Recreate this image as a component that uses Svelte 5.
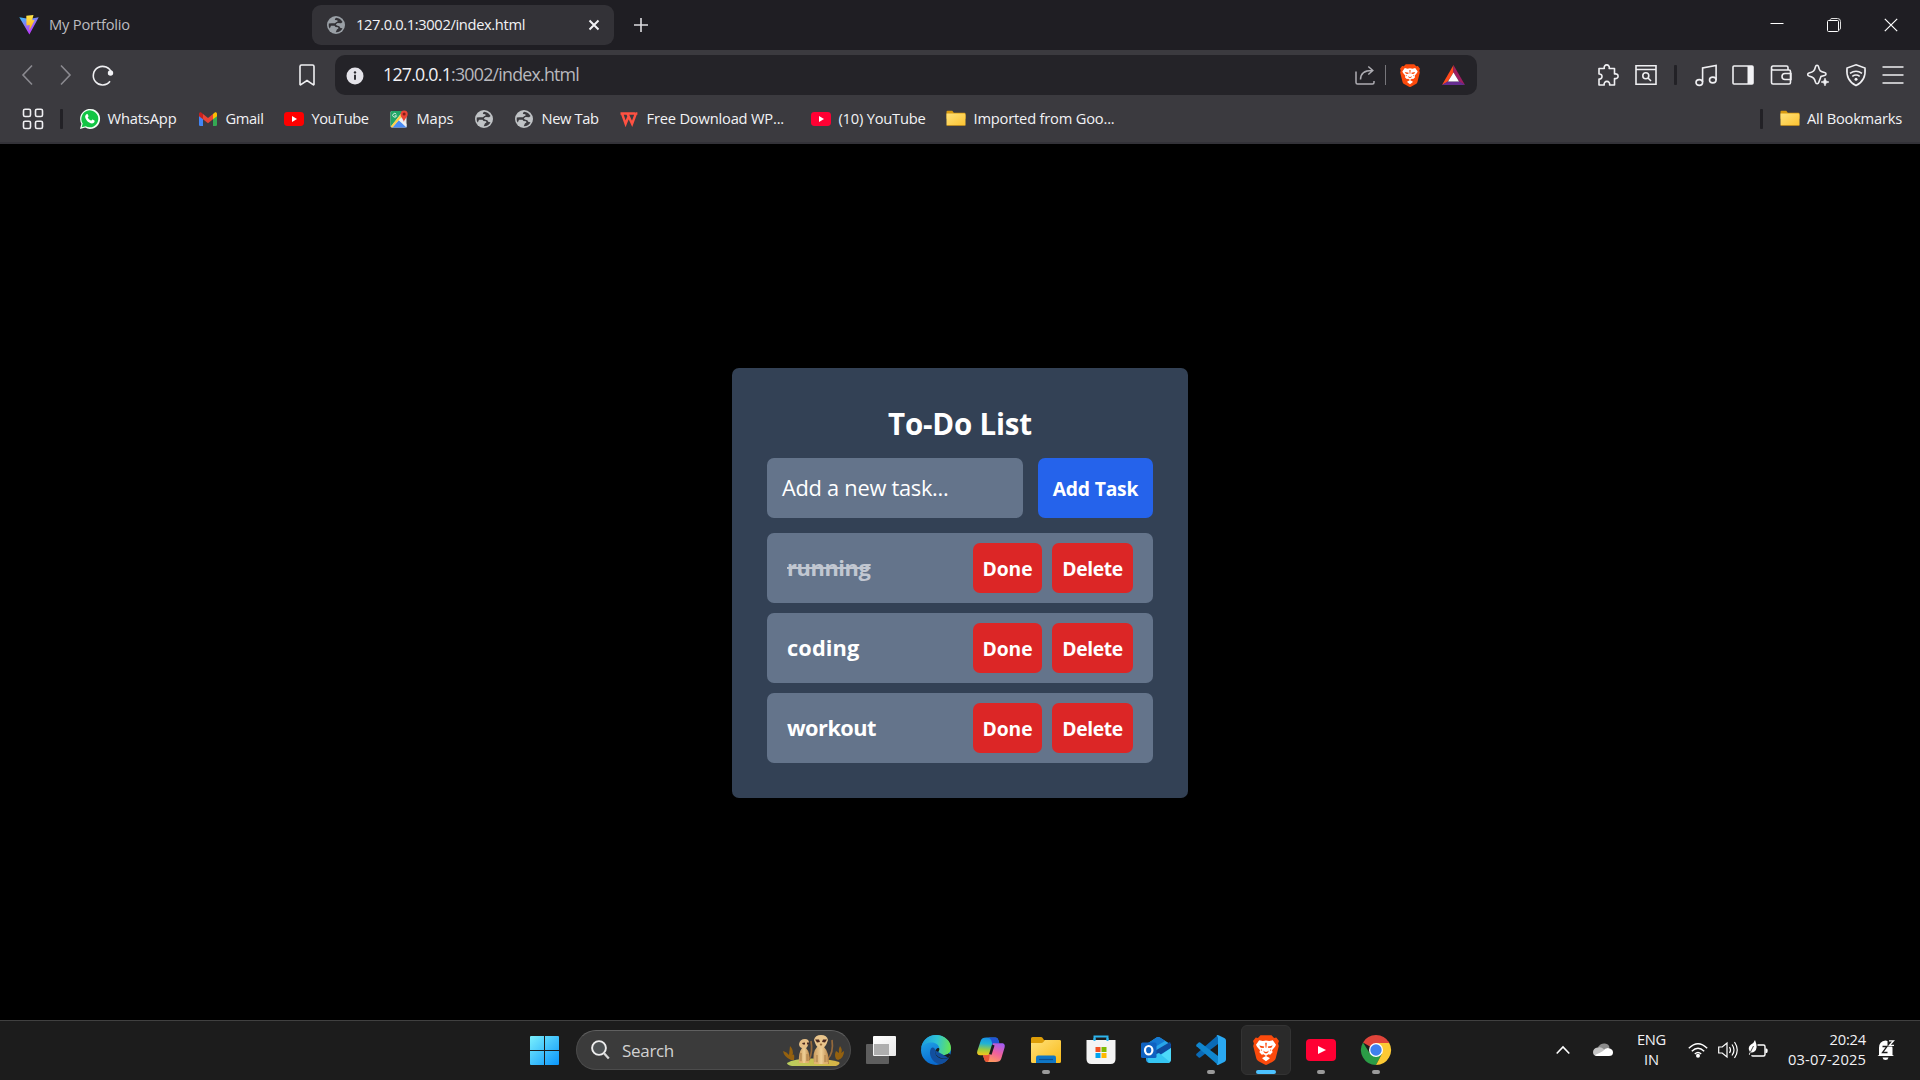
<script>
  // Adjusts tracking so that a label occupies its designed width.
  function fit(node, width) {
    const natural = node.getBoundingClientRect().width;
    const count = node.textContent.length;
    node.style.letterSpacing = `${(width - natural) / count}px`;
  }

  const bookmarks = [
    { icon: 'whatsapp', label: 'WhatsApp', text: 69, slot: 118 },
    { icon: 'gmail', label: 'Gmail', text: 38, slot: 86 },
    { icon: 'youtube', label: 'YouTube', text: 57, slot: 105 },
    { icon: 'maps', label: 'Maps', text: 37, slot: 85 },
    { icon: 'globe', label: '', text: 0, slot: 40 },
    { icon: 'globe', label: 'New Tab', text: 57, slot: 105 },
    { icon: 'wps', label: 'Free Download WP...', text: 137.5, slot: 192 },
    { icon: 'youtube2', label: '(10) YouTube', text: 87, slot: 135 },
    { icon: 'folder', label: 'Imported from Goo...', text: 141, slot: 180 }
  ];

  const tasks = [
    { name: 'running', width: 83.5, done: true },
    { name: 'coding', width: 72.5, done: false },
    { name: 'workout', width: 89, done: false }
  ];

  const apps = [
    { name: 'taskview' },
    { name: 'edge' },
    { name: 'copilot' },
    { name: 'explorer', open: true },
    { name: 'store' },
    { name: 'outlook' },
    { name: 'vscode', open: true },
    { name: 'brave', active: true },
    { name: 'ytapp', open: true },
    { name: 'chrome', open: true }
  ];
</script>

{#snippet globe(color, land)}
  <svg width="20" height="20" viewBox="0 0 20 20">
    <circle cx="10" cy="10" r="9" fill={color} />
    <path d="M10.200 2.700c-1 .5-1.500 1.200-1.200 2.200l2.200.3c.8.800.3 1.700-.8 1.900l-1.500 1.200H5.600l-2.800.1c-.3 2.200 0 3.800 1 5.200l1.200-2.800 3.500-.1 1 1.400 2.600.2.300 1.200-1.500 1.100-1.200 2.700c3 .2 5.500-1.300 6.800-4l-2-.4-1.200-1.600-2.500-.7-1-1.300 1.800-1.300 3.500.3 1.500-1.300c-1.200-2.400-3.600-4.200-6.400-4.300z" fill={land} />
  </svg>
{/snippet}

{#snippet lion(w, h)}
  <svg width={w} height={h} viewBox="0 0 26 30">
    <path d="M7.500.2h11l2.600 2.800 2.200-.4L26 6.100l-.9 2.500.7 2.400-3 12c-.5 1.800-1.200 2.500-2.800 3.500l-5.700 3.100c-.9.500-1.700.5-2.600 0L6 26.500c-1.600-1-2.300-1.700-2.800-3.500l-3-12 .7-2.400L0 6.100l2.700-3.500 2.200.4z" fill="#fb4a0c" />
    <path d="M13 5.500l3.200.6 3.600-.8 3.200 4.400-1 2-3 3.600.6 2-2.400 2.400-1.800-.4-2.400 1.600 3.800 2.200-.4.7-3.400 2.500-3.400-2.500-.4-.7L13 20.900l-2.400-1.600-1.800.4-2.400-2.400.6-2L4 11.700l-1-2 3.200-4.400 3.600.8z" fill="#fff" />
    <path d="M6.200 10.500l5 1-.5 1.400-3-.2zM19.800 10.500l-5 1 .5 1.400 3-.2zM12.200 7.800h1.600l-.4 5h-.8zM10.200 15.400l.8 2 2 1.200 2-1.200.8-2-1.200 1.200L13 17l-1.600-.4zM8.200 14l.8 2-1.300-.7zM17.800 14l-.8 2 1.300-.7z" fill="#fb4a0c" />
  </svg>
{/snippet}

{#snippet folder()}
  <svg width="20" height="20" viewBox="0 0 20 20">
    <path d="M.5 2.700q0-1 1-1h4.800l1.500 2h10.700q1 0 1 1v5H.5z" fill="#d89a10" />
    <path d="M.5 4.500h17.500q1.500 0 1.500 1.400v9.900q0 1.200-1.200 1.200H1.800Q.5 17 .5 15.700z" fill="url(#folderFill)" />
    <path d="M1 16.500h18" stroke="#b98a24" stroke-width="1" />
    <defs><linearGradient id="folderFill" x1="0" y1="0" x2="1" y2="1"><stop stop-color="#ffe27a" /><stop offset="1" stop-color="#fcc22f" /></linearGradient></defs>
  </svg>
{/snippet}

{#snippet favicon(name)}
  {#if name === 'whatsapp'}
    <svg width="20" height="20" viewBox="0 0 20 20">
      <path d="M0 20l1.400-5.200A10 10 0 1 1 5.200 18.600z" fill="#f4fff7" />
      <path d="M1.700 18.300l1-3.800a8.500 8.500 0 1 1 3 2.800z" fill="#12c544" />
      <path d="M6.800 5.100c.5-.2.900 0 1.100.5l.6 1.400c.2.500-.6 1.100-.8 1.500.8 1.500 1.900 2.500 3.500 3.200.5-.3 1-1.300 1.400-1.100l1.800.9c.7.400-.2 2.400-1.400 2.800-2 .6-4.700-1-6.200-2.900-1.600-2-2.700-4.700 0-6.300z" fill="#fff" />
    </svg>
  {:else if name === 'gmail'}
    <svg width="20" height="20" viewBox="0 0 20 20">
      <path d="M1 5.500l4 3.200V17H2.300Q1 17 1 15.700z" fill="#4285f4" />
      <path d="M19 5.500l-4 3.200V17h2.700q1.300 0 1.300-1.300z" fill="#34a853" />
      <path d="M15 5l1.500-1.300C17.600 2.900 19 3.600 19 5v2.300l-4 3z" fill="#fbbc04" />
      <path d="M5 5L3.500 3.700C2.400 2.900 1 3.600 1 5v2.300l4 3z" fill="#c5221f" />
      <path d="M5 5l5 3.900L15 5v5.300l-5 3.900-5-3.900z" fill="#ea4335" />
    </svg>
  {:else if name === 'youtube' || name === 'youtube2'}
    <svg width="20" height="20" viewBox="0 0 20 20">
      <rect x="0" y="3" width="20" height="14" rx="3.400" fill={name === 'youtube' ? '#ff0000' : '#ff0033'} />
      <path d="M8 7l5 3-5 3z" fill="#fff" />
    </svg>
  {:else if name === 'maps'}
    <svg width="20" height="20" viewBox="0 0 20 20">
      <rect x="1.500" y="2" width="16" height="16.500" rx="1.500" fill="#e6e8e8" />
      <path d="M1.500 17V3.500Q1.500 2 3 2h11L2 17.500z" fill="#23a566" />
      <path d="M10 10.800l7.500 6.200v1q0 .5-.8.500H3.500z" fill="#4a8cf5" />
      <path d="M1.700 17.500L14.500 2l2 2L3.300 18.500z" fill="#ffd04b" />
      <path d="M9.700 11.300l2-1.900 5.800 5.700v3.400z" fill="#f1f2f3" />
      <path d="M14.800 13c-.3-3-3.300-4.500-3.300-7.900a3.600 3.600 0 0 1 7.200 0c0 3.400-3.200 4.900-3.900 7.900z" fill="#ea4335" />
      <circle cx="15.100" cy="5" r="1.500" fill="#861f18" />
      <path d="M7.300 5.300a1.900 1.900 0 1 0 .2 1.500H5.700" fill="none" stroke="#e3f6ec" stroke-width=".9" />
    </svg>
  {:else if name === 'globe'}
    {@render globe('#bfc2c5', '#3b3a3f')}
  {:else if name === 'wps'}
    <svg width="20" height="20" viewBox="0 0 20 20">
      <path d="M1.500 4.500h14.700M3 4.500l3.600 10.300L10 6.200M8.300 4.500l4.800 10.300L16.900 4.500M16.500 4.500h1.900" fill="none" stroke="#ff5142" stroke-width="2.400" />
    </svg>
  {:else}
    {@render folder()}
  {/if}
{/snippet}

{#snippet appIcon(name)}
  {#if name === 'taskview'}
    <svg width="30" height="30" viewBox="0 0 30 30">
      <defs><linearGradient id="tvA" x2="1" y2="1"><stop stop-color="#fff" /><stop offset="1" stop-color="#e8e8e8" /></linearGradient></defs>
      <rect x="0" y="9" width="23" height="20" rx="1" fill="#5e5e5e" />
      <rect x="7" y="1" width="23" height="20" rx="1" fill="url(#tvA)" />
      <path d="M8 9h15v11H8z" fill="#aeaeae" />
    </svg>
  {:else if name === 'edge'}
    <svg width="30" height="30" viewBox="0 0 30 30">
      <defs>
        <linearGradient id="edA" x1="0" y1=".5" x2="1" y2=".6"><stop stop-color="#1c9de0" /><stop offset=".5" stop-color="#2fc3d4" /><stop offset="1" stop-color="#67e64f" /></linearGradient>
        <linearGradient id="edB" y2="1" x2=".4"><stop stop-color="#26b0ec" /><stop offset="1" stop-color="#0868cf" /></linearGradient>
      </defs>
      <circle cx="15" cy="15" r="15" fill="url(#edB)" />
      <path d="M.2 13C1.500 5 7.500 0 15 0c8.500 0 15 6 15 13 0 4.500-3.500 7-7.500 7-3.500 0-5.500-1.300-5.500-2.500 0-.8 1.300-1.400 1.300-3.500C18.300 10 14.500 7.600 10.800 7.600 6 7.600 2 9.500.2 13z" fill="url(#edA)" />
      <path d="M10 13.500c-3 5 .5 14.500 9.500 15.800 3.500-1 6.500-3.300 8.300-6.300.2-.6-.2-.9-.8-.6-6 3-15-.9-12.800-7.200-.4-2.400-2.600-3.800-4.200-1.700z" fill="#124f9e" />
      <path d="M17 17.500c0 1.200 2 2.500 5.500 2.500 2 0 3.900-.6 5.300-1.800l2 1.800-2.500 3c-4.500 2-13 .2-13.200-5.800 0-1.600.9-3 2.200-4 1.500-.4 2.100.3 2 1-.1 2-1.300 2.500-1.300 3.300z" fill="#1c1c1c" />
      <path d="M27 22.400c-6 3-13.800-1.200-12.800-7.200z" fill="#124f9e" />
    </svg>
  {:else if name === 'copilot'}
    <svg width="30" height="30" viewBox="0 0 30 30">
      <defs>
        <linearGradient id="cpA" x1=".5" y1="0" x2=".4" y2="1"><stop stop-color="#1690e8" /><stop offset=".35" stop-color="#20b2d4" /><stop offset=".7" stop-color="#9bcb3f" /><stop offset="1" stop-color="#f4c51c" /></linearGradient>
        <linearGradient id="cpB" x1=".8" y1="0" x2=".3" y2="1"><stop stop-color="#a35cf5" /><stop offset=".5" stop-color="#f0619c" /><stop offset="1" stop-color="#ff9f5a" /></linearGradient>
      </defs>
      <path d="M10.500 2.500h8.700c2 0 2.700 1 3.300 3l.8 2.700h-3.500c-2 0-2.800.8-3.300 2.500l-3 9.500H4.300C1.500 20.200.6 18.500 1.300 16L4.800 5.500c.8-2 2.200-3 5.700-3z" fill="url(#cpA)" />
      <path d="M12.500 2.500h6.700c2 0 2.700 1 3.300 3l.8 2.700h-3.500c-2 0-2.800.8-3.300 2.500-.5-4.500-1.500-7-4-8.200z" fill="#2354d4" />
      <path d="M19.500 27h-8c-2 0-2.800-1-3.300-3L7 20.200h3.700c2 0 2.900-.9 3.300-2.500l3-9.500h8.700c2.800 0 3.500 1.800 2.900 4.300l-3.400 11.200c-.8 2.300-2.400 3.300-5.700 3.300z" fill="url(#cpB)" />
      <path d="M7 20.200h3.700c2 0 2.900-.9 3.300-2.500-.8 4-.3 8.300-2.500 9.300-2 0-2.800-1-3.300-3z" fill="#e95437" />
      <path d="M17.300 10l-3 9.300" stroke="#1c1c1c" stroke-width="2.600" />
    </svg>
  {:else if name === 'explorer'}
    <svg width="30" height="30" viewBox="0 0 30 30">
      <defs><linearGradient id="exA" x2="1" y2="1"><stop stop-color="#ffe17b" /><stop offset="1" stop-color="#f9ba17" /></linearGradient></defs>
      <path d="M0 3.500Q0 2 1.500 2H10q1 0 1.500.8L13 5h15.500Q30 5 30 6.500V12H0z" fill="#dd9d08" />
      <path d="M0 8h10.500q1 0 1.700-.8L14 5h14.500Q30 5 30 6.500v20q0 1.500-1.500 1.500h-27Q0 28 0 26.500z" fill="url(#exA)" />
      <path d="M5 28v-5.500q0-2 2-2h16q2 0 2 2V28z" fill="#0f76c5" />
      <path d="M8 24.500h14" stroke="#0b4f91" stroke-width="1.200" />
    </svg>
  {:else if name === 'store'}
    <svg width="30" height="30" viewBox="0 0 30 30">
      <path d="M8.500 7V1.500h13V7" fill="none" stroke="#2db4ec" stroke-width="2" />
      <path d="M.5 5h29v19q0 5-5 5h-19q-5 0-5-5z" fill="#f4f4f4" />
      <path d="M8.500 6V3M21.500 6V3" stroke="#2db4ec" stroke-width="2" />
      <path d="M9.500 12h5v5h-5z" fill="#f25022" /><path d="M15.500 12h5v5h-5z" fill="#7fba00" />
      <path d="M9.500 18h5v5h-5z" fill="#00a4ef" /><path d="M15.500 18h5v5h-5z" fill="#ffb900" />
    </svg>
  {:else if name === 'outlook'}
    <svg width="30" height="30" viewBox="0 0 30 30">
      <path d="M5 9.500L15.500 2.600q1.700-1 3.400 0L30 9.500V24q0 4-4 4H9q-4 0-4-4z" fill="#28a5ea" />
      <path d="M5 9.500L15.500 2.600q1.700-1 3.400 0L24 6 9 15l-4-2z" fill="#1479d2" />
      <path d="M12 17L29 7l1 2.500V13L14 23z" fill="#0e4a9e" />
      <path d="M30 13v11q0 4-4 4H8z" fill="#4dd9fa" />
      <path d="M7 22l11-4 11 9q-1 1-3 1H9q-2 0-2-2z" fill="#35c5f2" />
      <rect x="0" y="7.500" width="15.500" height="15.500" rx="1.500" fill="#0f62c1" />
      <ellipse cx="7.700" cy="15.200" rx="3.700" ry="4.200" fill="none" stroke="#fff" stroke-width="2.200" />
    </svg>
  {:else if name === 'vscode'}
    <svg width="30" height="30" viewBox="0 0 30 30">
      <path d="M22 0v9L4.200 22.500q-.8.600-1.500 0L.5 20.400q-.8-.8 0-1.600z" fill="#0a6ab6" />
      <path d="M22 30v-9L4.200 7.500q-.8-.6-1.500 0L.5 9.600q-.8.800 0 1.600z" fill="#1086cf" />
      <path d="M20.500 29.500Q22 28.500 22 27V3q0-1.500-1.500-2.500.8-.8 2-.3L28.300 3Q30 3.900 30 5.500v19q0 1.600-1.700 2.500l-5.800 2.800q-1.200.5-2-.3z" fill="#2aa9f2" />
    </svg>
  {:else if name === 'brave'}
    {@render lion(26, 30)}
  {:else if name === 'ytapp'}
    <svg width="30" height="30" viewBox="0 0 30 30">
      <rect y="4" width="30" height="22" rx="4" fill="#ff0033" /><path d="M12 11l8 4-8 4z" fill="#fff" />
    </svg>
  {:else}
    <svg width="30" height="30" viewBox="0 0 30 30">
      <path d="M15 15L2 7.500A15 15 0 0 1 28 7.500z" fill="#e0443a" />
      <path d="M2 7.500A15 15 0 0 0 15 30l6.100-11.500L15 15 8.900 18.500z" fill="#2b9c46" />
      <path d="M28 7.500H15V15l6.100 3.500L15 30A15 15 0 0 0 28 7.500z" fill="#fcc934" />
      <path d="M15 8h13.200L27 6H6l2.900 5.500z" fill="#e0443a" />
      <circle cx="15" cy="15" r="7" fill="#fff" /><circle cx="15" cy="15" r="5.700" fill="#3f80ee" />
    </svg>
  {/if}
{/snippet}

<div class="screen">
  <header class="tabs">
    <div class="tab first">
      <svg width="20" height="20" viewBox="0 0 20 20">
        <defs><linearGradient id="viteA" x2=".5" y2="1"><stop stop-color="#36c3fb" /><stop offset=".6" stop-color="#9a66f5" /><stop offset="1" stop-color="#bd34fe" /></linearGradient>
          <linearGradient id="viteB" y2="1" x2="0"><stop stop-color="#ffe648" /><stop offset="1" stop-color="#ffa913" /></linearGradient></defs>
        <path d="M.3 2.300L10.500 4l9.200-1.700L10.400 19.600z" fill="url(#viteA)" />
        <path d="M7.300.8L14.500 0l-1.400 5.300 2.600-.3-5.400 10.500.5-5.500-3.300.5z" fill="url(#viteB)" />
      </svg>
      <span use:fit={81}>My Portfolio</span>
    </div>
    <div class="tab active">
      {@render globe('#9aa0a6', '#333237')}
      <span use:fit={169}>127.0.0.1:3002/index.html</span>
      <svg class="tab-close" width="12" height="12" viewBox="0 0 12 12"><path d="M1.500 1.500l9 9M10.500 1.500l-9 9" stroke="#f2f2f5" stroke-width="2" /></svg>
    </div>
    <svg class="plus" width="14" height="14" viewBox="0 0 14 14"><path d="M7 0v14M0 7h14" stroke="#dcdce0" stroke-width="1.600" /></svg>
    <div class="window-controls">
      <button aria-label="Minimize"><svg width="14" height="14" viewBox="0 0 14 14"><path d="M.5 5.500h13" stroke="#fff" stroke-width="1" /></svg></button>
      <button aria-label="Restore"><svg width="14" height="14" viewBox="0 0 14 14"><path d="M3 1.800Q3.500.5 5 .5h5.500q3 0 3 3V10q0 1.500-1.200 2" fill="none" stroke="#ddd" stroke-width="1" /><rect x=".5" y="2.500" width="11" height="11" rx="1" fill="none" stroke="#fff" /></svg></button>
      <button aria-label="Close"><svg width="14" height="14" viewBox="0 0 14 14"><path d="M.8.8l12.400 12.400M13.200.8L.8 13.200" stroke="#fff" stroke-width="1.200" /></svg></button>
    </div>
  </header>

  <div class="toolbar">
    <div class="nav">
      <svg width="22" height="22" viewBox="0 0 22 22"><path d="M16 1.500L7 11l9 9.500" class="dim" /></svg>
      <svg width="22" height="22" viewBox="0 0 22 22"><path d="M7 1.500l9 9.500-9 9.500" class="dim" /></svg>
      <svg width="22" height="22" viewBox="0 0 22 22"><path d="M20.500 9A9.300 9.300 0 1 0 19 17.300" class="line" /><circle cx="19.500" cy="9" r="2.700" fill="#f2f2f5" /></svg>
    </div>
    <svg class="mark" width="16" height="22" viewBox="0 0 16 22"><path d="M1 20.500V2.500Q1 1 2.500 1h11Q15 1 15 2.500v18q-.3.700-.9.200L8 16.500l-6.100 4.200q-.6.500-.9-.2z" class="line" /></svg>
    <div class="omnibox">
      <svg width="18" height="18" viewBox="0 0 18 18"><circle cx="9" cy="9" r="8.500" fill="#e4e3e9" /><path d="M9 7.800v5" stroke="#29282d" stroke-width="1.900" /><circle cx="9" cy="5.400" r="1.200" fill="#29282d" /></svg>
      <p class="url" use:fit={196}><b>127.0.0.1</b>:3002/index.html</p>
      <svg class="share" width="20" height="20" viewBox="0 0 20 20"><path d="M1 6.500v11Q1 19 2.500 19h15q1.500 0 1.500-1.500V16M5.500 14.500C5.500 8.500 9 5.500 17 5.500M13.300 1.500l4.500 4-4.500 4" fill="none" stroke="#aeadb3" stroke-width="1.500" /></svg>
      <i class="hair"></i>
      <span class="lion">{@render lion(20, 23)}</span>
      <svg width="23" height="20" viewBox="0 0 23 20"><path d="M11.500 0L0 20l5.500-3 6-9.500z" fill="#ff4a1c" /><path d="M11.500 0L23 20l-5.500-3-6-9.500z" fill="#9e1f63" /><path d="M0 20h23l-5.500-3.500h-12z" fill="#662d91" /><path d="M11.500 7.500l5.500 9H6z" fill="#fff" /></svg>
    </div>
    <div class="actions">
      <svg width="22" height="22" viewBox="0 0 22 22"><path d="M2 4.500h5.300C6.700 2.500 8 .9 9.700.9s3.100 1.600 2.500 3.600h5.300V10c2-.6 3.600.6 3.600 2.200s-1.600 2.900-3.600 2.300V21h-4.900c.5-2-.9-3.600-2.700-3.600S6.700 19 7.200 21H2v-6c2 .3 3-1 3-2.500S4 9.800 2 10z" class="line" stroke-linejoin="round" /></svg>
      <svg width="22" height="22" viewBox="0 0 22 22"><path d="M1 1.800h20v18.400H1zM1 5.500h20" class="line" /><circle cx="10.800" cy="11.800" r="3" class="line" /><path d="M13 14l3 3" class="line" /></svg>
      <i class="sep"></i>
      <svg width="22" height="22" viewBox="0 0 22 22"><ellipse cx="4.300" cy="18.500" rx="3.300" ry="2.900" class="line" /><ellipse cx="17.800" cy="16" rx="3.300" ry="2.900" class="line" /><path d="M7.600 18V4l13.500-2.500V16" class="line" /></svg>
      <svg width="22" height="22" viewBox="0 0 22 22"><rect x="1" y="2" width="20" height="18" rx="1" class="line" /><path d="M15.500 2H21v18h-5.500z" fill="#f2f2f5" /></svg>
      <svg width="22" height="22" viewBox="0 0 22 22"><path d="M1.500 4v14.500Q1.500 20 3 20h16q1.500 0 1.500-1.500V7.500Q20.500 6 19 6H3Q1.500 6 1.500 4t1.500-2h13.500Q18 2 18 3.500V6M21 9.500h-6q-3 0-3 3t3 3h6z" class="line" /></svg>
      <svg width="22" height="22" viewBox="0 0 22 22"><path d="M10 1.200c.8 0 1.300.6 1.500 1.500.8 4 2 5 6 5.800 2 .4 2 2.500 0 3l-3.500 1-2.200 5.700c-.6 2-2.700 2-3.300 0-1-4-2-5-6.500-6.200-1.700-.5-1.700-2.500 0-3 4.500-1 5.500-2.200 6.500-6.300.2-.9.700-1.500 1.500-1.500z" class="line" /><path d="M18 14l1.100 2.900L22 18l-2.900 1.100L18 22l-1.100-2.900L14 18l2.900-1.100z" fill="#f2f2f5" stroke="#f2f2f5" stroke-width=".6" /></svg>
      <svg width="22" height="22" viewBox="0 0 22 22"><path d="M11 .8l9 3.200c.8 8-1.500 14-9 17.500C3.500 18 1.200 12 2 4z" class="line" /><path d="M5 9.300q6-4.200 12 0M7.300 12.300q3.700-2.600 7.400 0" class="line" /><circle cx="11" cy="15.200" r="1.500" fill="#f2f2f5" /></svg>
      <svg width="22" height="22" viewBox="0 0 22 22"><path d="M.5 3h21M.5 11h21M.5 19h21" class="line" /></svg>
    </div>
  </div>

  <nav class="bookmarks">
    <svg width="22" height="22" viewBox="0 0 22 22"><rect x="1.500" y="1.200" width="7" height="7.300" rx="1.500" class="line" /><rect x="13.500" y="1.200" width="7" height="7.300" rx="1.500" class="line" /><rect x="1.500" y="13.200" width="7" height="7.300" rx="1.500" class="line" /><rect x="13.500" y="13.200" width="7" height="7.300" rx="1.500" class="line" /></svg>
    <i class="sep"></i>
    <ul>
      {#each bookmarks as item}
        <li style:width="{item.slot}px">
          {@render favicon(item.icon)}
          {#if item.label}<span use:fit={item.text}>{item.label}</span>{/if}
        </li>
      {/each}
    </ul>
    <i class="sep end"></i>
    <div class="all">{@render folder()}<span use:fit={95}>All Bookmarks</span></div>
  </nav>

  <main>
    <section class="card">
      <h1><span use:fit={144}>To-Do List</span></h1>
      <form>
        <div class="field"><span use:fit={166.5}>Add a new task...</span></div>
        <button type="button" class="add"><span use:fit={85.5}>Add Task</span></button>
      </form>
      {#each tasks as task}
        <article>
          <p class:done={task.done}><span use:fit={task.width}>{task.name}</span></p>
          <button class="finish"><span use:fit={50}>Done</span></button>
          <button class="delete"><span use:fit={60.5}>Delete</span></button>
        </article>
      {/each}
    </section>
  </main>

  <footer>
    <svg class="start" width="29" height="29" viewBox="0 0 29 29">
      <defs><linearGradient id="winA" gradientUnits="userSpaceOnUse" x2="29" y2="29"><stop stop-color="#7af0fd" /><stop offset="1" stop-color="#0a95fb" /></linearGradient></defs>
      <path d="M1 0h13v14H0V1q0-1 1-1zM15 0h13q1 0 1 1v13H15zM0 15h14v14H1q-1 0-1-1zM15 15h14v13q0 1-1 1H15z" fill="url(#winA)" />
    </svg>
    <div class="search">
      <svg width="19" height="20" viewBox="0 0 19 20"><circle cx="8" cy="8" r="6.900" fill="#4e5254" stroke="#eee" stroke-width="1.900" /><path d="M12.800 13l5 5.500" stroke="#d8d8d8" stroke-width="2.300" /></svg>
      <span use:fit={52}>Search</span>
      <svg class="meerkats" width="61" height="32" viewBox="0 0 61 32">
        <defs><linearGradient id="hill" x2="1" y2="0"><stop stop-color="#b9ce5f" /><stop offset="1" stop-color="#d8b345" /></linearGradient>
          <linearGradient id="fur" x2="1" y2="0"><stop stop-color="#c99a5c" /><stop offset=".5" stop-color="#efcf96" /><stop offset="1" stop-color="#b98547" /></linearGradient></defs>
        <path d="M4 28Q12 23 30 23.500T56 27q2 2-3 4H9Q4 30 4 28z" fill="url(#hill)" />
        <path d="M8 25Q1 22 0 16q4 1 6 4l1-9q4 4 2.500 9Q12 18 11 25zM53 24q-2-4 0-8l3 2q-1-4 1-7 3 4 1 7l3-2q0 7-6 9z" fill="#94610f" />
        <path d="M26 25q4-8 2-19M44 25q7-7 5-20" fill="none" stroke="#95693b" stroke-width="1.700" />
        <path d="M16 28q-1-10 3-15h4q5 5 3 15z" fill="url(#fur)" />
        <path d="M16 9q1-5 6-5 4 0 4 4l-1 2q-1 4-5 3.500-4-1-4-4.500z" fill="#e6bf86" />
        <path d="M31 29q-2-12 3-17h7q5 5 5 17z" fill="url(#fur)" />
        <path d="M31 5q1-5 7-5t7 5l-1.500 4q-2 4-5.500 4.500Q34 13 32.500 9z" fill="#e9c58c" />
        <path d="M32 4.500h4l1 2.500-3 .6zM44 4.500h-4l-1 2.500 3 .6zM19 8l3-.5v2h-2zM24 7.500h2v2h-2z" fill="#4b2a21" />
        <path d="M37 9h2l-1 1.500zM18 27v-9M24 27v-8M34 28v-8M42 28v-8" fill="#4b2a21" stroke="#9e7038" stroke-width=".8" />
        <path d="M16 27h4M22 27h4M31 28h5M40 28h5" stroke="#e7b871" stroke-width="1.600" />
      </svg>
    </div>
    <div class="apps">
      {#each apps as app}
        <div class="app" class:active={app.active} class:open={app.open}>{@render appIcon(app.name)}</div>
      {/each}
    </div>
    <div class="tray">
      <svg width="14" height="10" viewBox="0 0 14 10"><path d="M.7 8.500L7 2l6.300 6.500" fill="none" stroke="#fff" stroke-width="1.600" /></svg>
      <svg class="cloud" width="20" height="14" viewBox="0 0 20 14"><path d="M5 4Q8 0 12 .6q4 .7 4.500 4L10 10z" fill="#8b8b8b" /><path d="M4.500 4.500q4-1 6 1.500L17 10l-4 3H4Q0 13 0 9q.300-4 4.500-4.500z" fill="#c4c4c4" /><path d="M2 12q4-1.500 8-4 3-4 7-2.500 3 1 3 4 0 3.500-4 3.500H4q-1.500 0-2-1z" fill="#fff" /></svg>
      <div class="lang"><span use:fit={29}>ENG</span><span use:fit={15}>IN</span></div>
      <svg class="wifi" width="20" height="16" viewBox="0 0 20 16"><path d="M.8 6.200q9.200-9 18.400 0M3.800 9.200q6.200-6 12.400 0M6.800 12q3.200-3 6.400 0" fill="none" stroke="#fff" stroke-width="1.400" /><circle cx="10" cy="13.700" r="2" fill="#fff" /></svg>
      <svg class="sound" width="20" height="18" viewBox="0 0 20 18"><path d="M.7 6h3.500L9 2v14l-4.800-4H.7z" fill="none" stroke="#fff" stroke-width="1.200" /><path d="M11.500 6q2 3 0 6M14 3.500q4 5.500 0 11M16.500 1q5.500 8 0 16" fill="none" stroke="#fff" stroke-width="1.200" /></svg>
      <svg class="battery" width="20" height="18" viewBox="0 0 20 18"><path d="M9.500 5h6Q17 5 17 6.500v8q0 1.500-1.500 1.500H5q-1 0-1.500-.6" fill="none" stroke="#fff" stroke-width="1.400" /><path d="M17.500 8.500h1q1.200 0 1.200 2.200t-1.200 2.300h-1z" fill="#fff" /><path d="M.8 14.500L2 12q-3-4.500 1-7.500Q6 3 7 0q3.500 8.500-.5 11.500-2 1.500-3.800.8L1.500 15z" fill="#fff" /><path d="M2.200 12.500L5.500 6" stroke="#1c1c1c" stroke-width=".8" /></svg>
      <div class="clock"><span use:fit={36.5}>20:24</span><span use:fit={78}>03-07-2025</span></div>
      <svg class="bell" width="18" height="20" viewBox="0 0 18 20"><path d="M2 15V8q0-7 6.500-7.500Q15 1 15.500 8v7l1.500 1H.500zM5.500 17.500h6q-.5 2.500-3 2.500t-3-2.500z" fill="#fff" /><path d="M10.500 0h8v6.500h-8z" fill="#1c1c1c" /><path d="M12 .8h4.500l-4 4.500H17" fill="none" stroke="#fff" stroke-width="1.300" /><path d="M5.500 6.500H10l-4.500 6h5" fill="none" stroke="#1c1c1c" stroke-width="1.300" /></svg>
    </div>
  </footer>
</div>

<style>
  :global(body) { margin: 0; background: #000; }
  .screen {
    width: 1920px;
    height: 1080px;
    display: flex;
    flex-direction: column;
    overflow: hidden;
    color: #f2f2f5;
    font: 14.7px/20px 'Open Sans', 'Noto Sans', sans-serif;
    white-space: nowrap;
  }
  svg { display: block; flex: none; overflow: visible; }
  span { display: inline-block; flex: none; }
  button { border: 0; padding: 0; font: inherit; color: inherit; background: none; }
  .line { fill: none; stroke: #efeff2; stroke-width: 1.6; }
  .dim { fill: none; stroke: #8b8a90; stroke-width: 1.6; }

  .tabs { height: 50px; display: flex; align-items: center; background: #1f1e23; }
  .tab { display: flex; align-items: center; box-sizing: border-box; height: 40px; }
  .tab span { margin-bottom: 2px; }
  .first { width: 312px; padding-left: 19px; gap: 10px; color: #bcbcc0; }
  .active.tab { width: 302px; padding: 0 14px 0 14px; gap: 10px; border-radius: 9px; background: #333237; }
  .tab-close { margin-left: auto; }
  .plus { margin-left: 20px; }
  .window-controls { margin-left: auto; margin-right: 1px; display: flex; }
  .window-controls button { width: 57px; height: 50px; display: grid; place-items: center; }

  .toolbar { height: 50px; display: flex; align-items: center; background: #3b3a3f; }
  .nav { display: flex; gap: 15.5px; padding-left: 16px; }
  .mark { margin-left: 186px; }
  .omnibox { box-sizing: border-box; width: 1142px; height: 40px; margin-left: 20px; padding: 0 12px 0 11px; display: flex; align-items: center; border-radius: 10px; background: #242328; }
  .omnibox > svg:first-child { margin-top: 1px; }
  .url { margin: -2px 0 0 19px; font-size: 17.8px; line-height: 24px; color: #b9b9be; }
  .url b { font-weight: 400; color: #f0f0f4; }
  .share { margin-left: auto; }
  .hair { width: 1px; height: 20px; margin: 0 14px 0 10px; background: #77767b; }
  .lion { margin-right: 22px; }
  .actions { margin-left: auto; padding-right: 16px; display: flex; align-items: center; gap: 15.5px; }
  .sep { width: 3px; height: 20px; border-radius: 1px; background: #222126; }
  .actions .sep { margin: 0 2px; }

  .bookmarks { height: 44px; box-sizing: border-box; padding: 0 18px 4px 22px; border-bottom: 2px solid #333238; display: flex; align-items: center; background: #3b3a3f; }
  .bookmarks > .sep { margin-left: 16px; }
  .bookmarks ul { margin: 0 0 0 17px; padding: 0; display: flex; list-style: none; }
  .bookmarks li, .all { display: flex; align-items: center; gap: 7.5px; }
  .bookmarks span { margin-bottom: 2px; }
  .bookmarks > .end { margin-left: auto; }
  .all { margin-left: 17px; }

  main { height: 876px; display: grid; justify-content: center; align-content: start; padding-top: 224px; box-sizing: border-box; background: #000; }
  .card { box-sizing: border-box; width: 456px; height: 430px; padding: 35px; border-radius: 7px; background: #334155; color: #fff; font-size: 21.8px; }
  h1 { margin: 0; height: 40px; line-height: 42px; text-align: center; font-size: 29.5px; font-weight: 700; }
  form { display: flex; gap: 15px; margin: 15px 0; }
  .field { width: 256px; height: 60px; box-sizing: border-box; padding-left: 15px; line-height: 59px; border-radius: 7px; background: #64748b; }
  .add { width: 115px; padding-top: 1px; border-radius: 7px; background: #2563eb; font-size: 19.3px; font-weight: 700; }
  article { height: 70px; box-sizing: border-box; margin-bottom: 10px; padding: 0 20px; display: flex; align-items: center; gap: 10px; border-radius: 7px; background: #64748b; font-weight: 700; }
  article p { margin: 0 auto 1px 0; line-height: 30px; }
  .done span { color: #c1c7d1; text-decoration: line-through; }
  article button { box-sizing: border-box; width: 69px; height: 50px; padding-top: 2px; border-radius: 7px; background: #dc2626; font-size: 19.3px; font-weight: 700; }
  article .delete { width: 81px; }

  footer { height: 60px; box-sizing: border-box; border-top: 1px solid #404040; padding-bottom: 1px; display: flex; align-items: center; background: #1c1c1c; }
  .start { margin-left: 530px; }
  .search { box-sizing: border-box; width: 275px; height: 40px; margin-left: 17px; padding: 0 6px 0 14px; display: flex; align-items: center; gap: 12px; border: 1px solid #4c4c4c; border-top-color: #606060; border-radius: 20px; background: #3b3b3b; color: #d2d2d2; font-size: 17px; }
  .search span { margin-top: 2px; }
  .meerkats { margin-left: auto; margin-top: 2px; }
  .apps { display: flex; gap: 5px; margin-left: 5px; }
  .app { position: relative; width: 50px; height: 50px; box-sizing: border-box; display: grid; place-items: center; border-radius: 6px; }
  .app.active { background: #2a2a2a; border: 1px solid #333; }
  .app.open::after, .app.active::after { content: ''; position: absolute; left: 21px; bottom: 1px; width: 8px; height: 4px; border-radius: 2px; background: #9a9a9a; }
  .app.active::after { left: 14px; bottom: 0; width: 20px; background: #4cc2ff; }
  .tray { margin-left: auto; display: flex; align-items: center; padding-right: 25px; }
  .cloud { margin-left: 23px; }
  .lang { margin-left: 23px; width: 31px; display: grid; justify-items: center; }
  .lang, .clock { padding-bottom: 2px; }
  .wifi { margin-left: 21px; }
  .sound { margin-left: 10px; }
  .battery { margin-left: 10px; margin-top: -2px; }
  .clock { margin-left: 19px; width: 79px; display: grid; justify-items: end; }
  .bell { margin-left: 11px; }
</style>
